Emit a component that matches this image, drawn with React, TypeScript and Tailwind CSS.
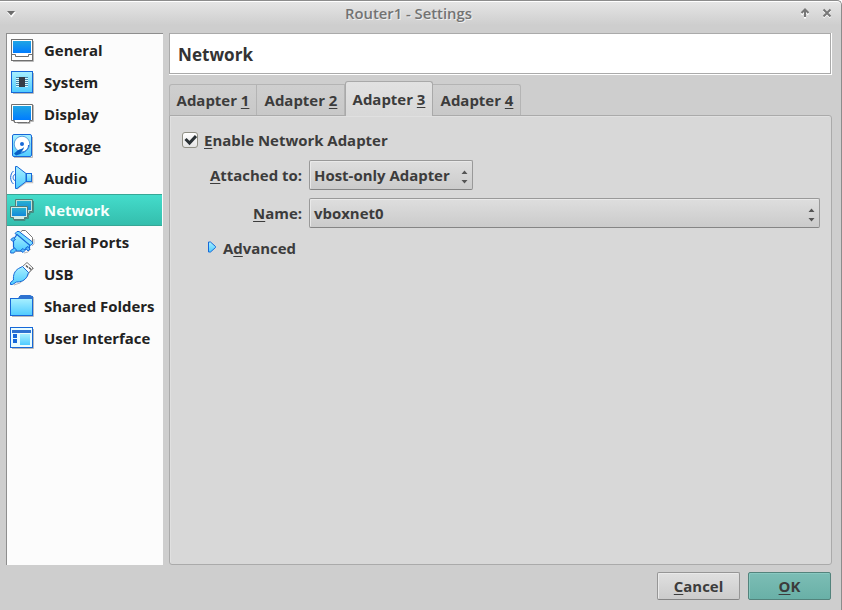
import type { ReactNode } from "react";

const B = "#1668d8";

function Defs() {
  return (
    <svg width="0" height="0" className="absolute">
      <defs>
        <linearGradient id="screen" x1="0" y1="0" x2="0" y2="1">
          <stop offset="0" stopColor="#1fa5e4" />
          <stop offset="1" stopColor="#007cff" />
        </linearGradient>
        <linearGradient id="pale" x1="0" y1="0" x2="0" y2="1">
          <stop offset="0" stopColor="#a8f0ff" />
          <stop offset="1" stopColor="#4fcbff" />
        </linearGradient>
        <linearGradient id="netscreen" x1="0" y1="0" x2="0" y2="1">
          <stop offset="0" stopColor="#2bb0d0" />
          <stop offset="1" stopColor="#1288dc" />
        </linearGradient>
      </defs>
    </svg>
  );
}

function Icon({ children }: { children: ReactNode }) {
  return (
    <svg width="26" height="26" viewBox="0 0 26 26" className="block shrink-0">
      {children}
    </svg>
  );
}

const icons: Record<string, ReactNode> = {
  General: (
    <Icon>
      <path d="M3 23.500h20.500V3" fill="none" stroke="#b9b9b9" />
      <rect x="1.500" y="1.500" width="21" height="21" fill="#fff" stroke="#6f6f6f" />
      <path d="M2 16.500h3.500v2h13v-2h3.500" fill="none" stroke="#6f6f6f" />
      <rect x="3" y="3" width="18" height="12" fill="url(#screen)" />
    </Icon>
  ),
  System: (
    <Icon>
      <path d="M3 23.500h20.500V3" fill="none" stroke="#b9b9b9" />
      <rect x="1.500" y="1.500" width="21" height="21" fill="url(#pale)" stroke={B} />
      <path d="M6 7.500h12M6 9.500h12M6 11.500h12M6 13.500h12M6 15.500h12" stroke="#4687ad" />
      <path d="M6 8.500h12M6 10.500h12M6 12.500h12M6 14.500h12M6 16.500h12" stroke="#d8faff" />
      <rect x="9" y="7" width="6" height="10" fill="#353c46" />
    </Icon>
  ),
  Display: (
    <Icon>
      <path d="M3 19.500h3l2 2h12v-2h3.500V3" fill="none" stroke="#b9b9b9" />
      <path d="M1.500 2.500h21v16h-3v2h-2h-11h-2v-2h-3z" fill="#fff" stroke="#6f6f6f" />
      <rect x="3" y="4" width="18" height="14" fill="url(#screen)" />
    </Icon>
  ),
  Storage: (
    <Icon>
      <path d="M4 23.500h18.500V3" fill="none" stroke="#b9b9b9" />
      <rect x="2.500" y="0.500" width="19" height="22" rx="1.500" fill="url(#pale)" stroke={B} />
      <circle cx="12" cy="10" r="7.800" fill="#fff" stroke="#5ba1de" />
      <circle cx="12" cy="10" r="2" fill={B} />
      <path d="M18.500 11c.5 6-7 9-11.500 8.500" fill="none" stroke={B} />
      <path d="M14 13c-1.500 2-4 2-6.500 3.500l-3.500 3 2 2 4.500-1.500c0-2.500 3-3 3.500-7z" fill="#075fc5" />
    </Icon>
  ),
  Audio: (
    <Icon>
      <path d="M7 23l9-6.500h6.500V9" fill="none" stroke="#c3c3c3" strokeWidth="1.500" />
      <path d="M5.500 0.500h1.500l9 7v8l-9 7H5.500z" fill="url(#pale)" stroke={B} />
      <rect x="16.500" y="7.500" width="5" height="8" fill="url(#pale)" stroke={B} />
      <path d="M3.500 5C-.3 8 -.3 15 3.500 18M5 8.500C2.500 9 2.500 14 5 14.500" fill="none" stroke={B} />
    </Icon>
  ),
  Network: (
    <Icon>
      <path d="M9 16.500h11v-2h3.500V3M4 22.500h11v-2h3.500V10" fill="none" stroke="#438d84" />
      <path d="M5.500 1.500h17v12h-3v2h-10v-2h-4z" fill="#bfe1db" stroke="#547d76" />
      <rect x="7" y="3" width="14" height="9" fill="url(#netscreen)" />
      <path d="M.500 8.500h17v11h-3v2h-11v-2h-3z" fill="#d4ebe7" stroke="#547d76" />
      <rect x="2" y="10" width="14" height="8" fill="url(#netscreen)" />
    </Icon>
  ),
  "Serial Ports": (
    <Icon>
      <path d="M3 23.500l3-2h5M14 23l4-1 3-3M22 16l2-2V9" fill="none" stroke="#b9b9b9" />
      <path d="M10.500 2.500L12 .500h3.500L22.500 7.500V12l-3 1z" fill="#fff" stroke="#777" />
      <path d="M5 3.500L7 1.500h2L22.500 12v2L20 15.500z" fill="#77dcff" stroke={B} />
      <path d="M7 4.500L19.500 15v2.500L12 21H6.500L3.500 17V9.500z" fill="url(#pale)" stroke={B} strokeWidth="1.200" />
      <path d="M.800 9.500l2.500-2 2.200 2-2.700 2zM10.500 20.500l2.500-2 2 2-2 2zM15.500 18l2.500-1.500 2 2.500-2 2z" fill="#58b9fa" stroke={B} />
      <path d="M4.500 18l2 2-3 3H.700v-2.500z" fill="#5cceff" stroke={B} />
    </Icon>
  ),
  USB: (
    <Icon>
      <path d="M4 23l6-2 7-6 2-4 5-5" fill="none" stroke="#b7b7b7" />
      <path d="M12.500 4.500L17 .500l6 5.500-4.500 5z" fill="#fff" stroke="#777" />
      <path d="M16 3.500l2 2M19 5.500l2 2" stroke="#555" strokeWidth="1.500" />
      <path d="M12.500 4.500l6 6-1.500 4c-2 4-6 5.500-10.500 5.500L2.500 22.500H.500v-2l3-2.500c-.5-5 1-9 5-11.500z" fill="url(#pale)" stroke={B} />
    </Icon>
  ),
  "Shared Folders": (
    <Icon>
      <path d="M2 22.500h21.500V3" fill="none" stroke="#b9b9b9" />
      <path d="M9 5V3l1.500-1.500h10L22.500 3v3H9z" fill="#2d72d0" stroke="#2d72d0" />
      <rect x=".500" y="4.500" width="22" height="17" fill="url(#pale)" stroke={B} />
      <rect x="9" y="2" width="14" height="3" fill="#2d72d0" />
    </Icon>
  ),
  "User Interface": (
    <Icon>
      <path d="M2 22.500h21.500V3" fill="none" stroke="#b9b9b9" />
      <rect x=".500" y="1.500" width="22" height="20" fill="#e9fcff" stroke={B} />
      <rect x="2" y="4" width="19" height="3" fill="#2d72d0" />
      <rect x="3" y="8" width="4" height="4" fill={B} />
      <rect x="3" y="13" width="4" height="4" fill={B} />
      <rect x="10" y="8" width="10" height="11" fill="url(#pale)" />
    </Icon>
  ),
};

function U({ children }: { children: ReactNode }) {
  return (
    <span className="underline decoration-1 underline-offset-[2px] [text-decoration-skip-ink:none]">
      {children}
    </span>
  );
}

function Tab({ n, active }: { n: number; active?: boolean }) {
  return (
    <div
      className={
        active
          ? "flex h-[35px] w-[88px] justify-center rounded-t-[3px] border border-b-0 border-[#a9a9a9] bg-linear-to-b from-[#e2e2e2] to-[#d8d8d8] pt-[6px] leading-[22px]"
          : "mb-px flex h-[31px] w-[88px] justify-center border-t border-r border-[#b4b4b4] bg-linear-to-b from-[#cfcfcf] to-[#c8c8c8] pt-[4px] pl-px leading-[22px] first:rounded-tl-[3px] first:border-l first:pl-0 last:rounded-tr-[3px]"
      }
    >
      <span className="whitespace-pre">
        Adapter <U>{n}</U>
      </span>
    </div>
  );
}

function Combo({ text, className }: { text: string; className: string }) {
  return (
    <div
      className={
        "flex h-[30px] items-center justify-between rounded-[2px] border border-[#999] border-b-[#858585] bg-linear-to-b from-[#dedede] to-[#cbcbcb] pr-[4px] pl-[4px] shadow-[inset_1px_1px_0_#e9e9e9] " +
        className
      }
    >
      <span>{text}</span>
      <svg width="7" height="14" viewBox="0 0 7 14" className="mt-[3px]">
        <path d="M.5 4L3.500 .5 6.500 4zM.5 10h6l-3 3.500z" fill="#555" />
      </svg>
    </div>
  );
}

export default function App() {
  return (
    <div className="flex h-[610px] w-[842px] flex-col overflow-hidden rounded-tr-[5px] border-t border-r border-[#8c8c8c] bg-[#cecece] font-['Open_Sans','Noto_Sans',sans-serif] text-[14.95px] font-bold text-[#3c3c3c]">
      <Defs />
      <header className="grid h-8 shrink-0 grid-cols-[339px_1fr_32px] items-center rounded-tr-[4px] border-t border-white bg-linear-to-b from-[#e5e5e5] to-[#cecece] to-75% pr-[9px] pl-[6px]">
        <svg width="44" height="12" viewBox="0 0 44 12" className="mt-[-7px]">
          <path d="M1 4h9L5.500 9.500z" fill="#fff" />
          <path d="M1 3h8L5 7.500z" fill="#6c6c6c" />
        </svg>
        <h1 className="mt-[-8px] text-[14.8px] font-semibold text-[#737373] [text-shadow:1px_1px_0_#f0f0f0]">
          Router1 - Settings
        </h1>
        <svg width="32" height="12" viewBox="0 0 32 12" className="mt-[-9px]">
          <path d="M5 10.500V4M1.500 6.500L5 3l3.500 3.500" fill="none" stroke="#fff" strokeWidth="2" transform="translate(0 1)" />
          <path d="M5 10V4M1.500 6L5 2.500 8.500 6" fill="none" stroke="#777" strokeWidth="2" />
          <path d="M23.500 3.500l7 7m0-7l-7 7" stroke="#fff" strokeWidth="2" />
          <path d="M23.500 2.500l7 7m0-7l-7 7" stroke="#777" strokeWidth="2" />
        </svg>
      </header>
      <main className="flex h-[532px] shrink-0 gap-[6px] pl-[6px]">
        <nav className="w-[157px] border-t border-l border-[#8e8e8e] bg-[#fcfcfc] text-[#222]">
          {Object.entries(icons).map(([name, icon]) => (
            <div
              key={name}
              className={
                name === "Network"
                  ? "mr-px flex h-8 items-center gap-[8px] border-y border-[#37a796] bg-linear-to-b from-[#44dccb] to-[#34bead] pl-[3px] text-[#f5fffd]"
                  : "flex h-8 items-center gap-[8px] pl-[3px]"
              }
            >
              <span className="mt-[2px]">{icon}</span>
              <span className="whitespace-nowrap">{name}</span>
            </div>
          ))}
        </nav>
        <section className="flex w-[663px] flex-col">
          <div className="h-[42px] w-[663px] shrink-0 border-r border-b border-white">
            <h2 className="flex h-[41px] items-center border border-[#aaa] bg-white pt-[2px] pl-[8px] text-[17.1px] text-[#333]">
              Network
            </h2>
          </div>
          <div className="z-10 mt-[6px] mb-[-1px] flex h-[35px] items-end">
            <Tab n={1} />
            <Tab n={2} />
            <Tab n={3} active />
            <Tab n={4} />
          </div>
          <div className="flex grow flex-col rounded-b-[3px] rounded-tr-[3px] border border-[#aaa] bg-[#d8d8d8] pt-[13px] pl-[12px] shadow-[inset_1px_1px_0_#e0e0e0]">
            <label className="flex h-[22px] items-center gap-[6px]">
              <span className="flex size-[16px] items-center justify-center rounded-[3px] border border-[#909085] bg-linear-to-b from-white to-[#e5e5e5]">
                <svg width="14" height="14" viewBox="0 0 14 14">
                  <path d="M2.500 6l4 4L13 3" fill="none" stroke="#2b3236" strokeWidth="3" />
                </svg>
              </span>
              <span>
                <U>E</U>nable Network Adapter
              </span>
            </label>
            <div className="mt-[9px] grid grid-cols-[120px_511px] items-center gap-x-[7px] gap-y-[8px]">
              <span className="text-right">
                <U>A</U>ttached to:
              </span>
              <Combo text="Host-only Adapter" className="w-[164px]" />
              <span className="text-right">
                <U>N</U>ame:
              </span>
              <Combo text="vboxnet0" className="w-[511px]" />
            </div>
            <div className="mt-[9px] flex h-[22px] items-center gap-[6px] pl-[25px]">
              <svg width="10" height="12" viewBox="0 0 10 12" className="mt-[-3px]">
                <path d="M1.500 1h2l5 4.500v1l-5 4.500h-2z" fill="url(#pale)" stroke={B} />
              </svg>
              <span>
                A<U>d</U>vanced
              </span>
            </div>
          </div>
        </section>
      </main>
      <footer className="flex justify-end gap-[8px] pt-[7px] pr-[10px]">
        <button className="h-[28px] w-[83px] rounded-[2px] border border-[#969696] border-b-[#858585] bg-linear-to-b from-[#e0e0e0] to-[#cbcbcb] shadow-[inset_1px_1px_0_#eaeaea]">
          <U>C</U>ancel
        </button>
        <button className="h-[28px] w-[83px] rounded-[2px] border border-[#53837c] bg-linear-to-b from-[#7cbdb5] to-[#69b0a7] shadow-[inset_1px_1px_0_#89c9c1]">
          <U>O</U>K
        </button>
      </footer>
    </div>
  );
}
